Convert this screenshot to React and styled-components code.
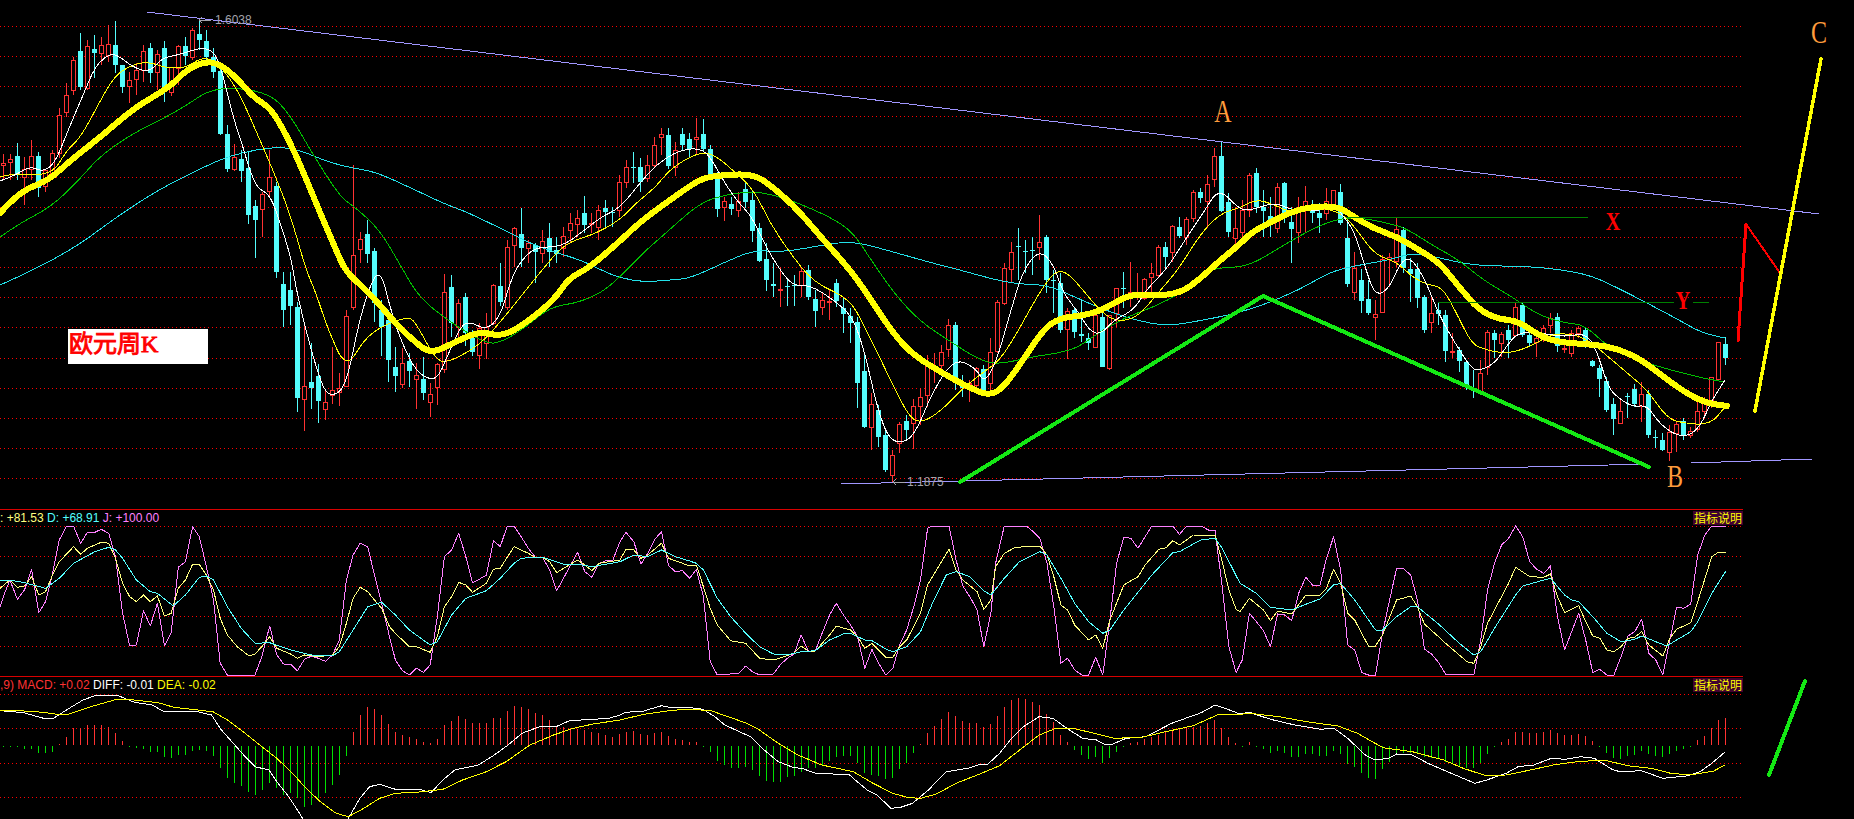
import React from 'react';
import styled, { createGlobalStyle } from 'styled-components';

const GlobalStyle = createGlobalStyle`
    html, body {
        margin: 0;
        background: #000;
        overflow: hidden;
    }
    body {
        font-family: "Liberation Sans", Arial, sans-serif;
    }
`;

const Page = styled.div`
    display: flex;
    flex-direction: column;
    width: 1854px;
    height: 819px;
    background: #000;
`;

const Pane = styled.div`
    position: relative;
    flex: 0 0 ${(p) => p.$height}px;
    overflow: hidden;
`;

const Divider = styled.div`
    flex: 0 0 1px;
    width: 1743px;
    background: #d80000;
`;

const ChartSvg = styled.svg`
    display: block;
    width: 1854px;
    height: 100%;
`;

const StockTag = styled.div`
    position: absolute;
    left: 68px;
    top: 329px;
    width: 140px;
    height: 35px;
    padding-left: 1px;
    box-sizing: border-box;
    background: #fff;
    color: #ff0000;
    font: 24px/30px "Liberation Serif", "Noto Sans CJK SC", serif;
    -webkit-text-stroke: 0.9px #ff0000;
    white-space: nowrap;
`;

const WaveTag = styled.span`
    position: absolute;
    left: ${(p) => p.$x}px;
    top: ${(p) => p.$y}px;
    transform: translate(-50%, -50%) scaleY(1.3);
    color: ${(p) => p.$color};
    font: ${(p) => (p.$bold ? 'bold 20px' : '24px')} / 1 "Liberation Serif", serif;
`;

const PriceMark = styled.span`
    position: absolute;
    left: ${(p) => p.$x}px;
    top: ${(p) => p.$y}px;
    color: #a4a4ac;
    font-size: 12px;
    line-height: 12px;
`;

const Legend = styled.div`
    position: absolute;
    left: 0;
    top: 0;
    font-size: 12px;
    line-height: 16px;
    white-space: pre;
`;

const LegendItem = styled.span`
    color: ${(p) => p.$color};
`;

const HelpTag = styled.div`
    position: absolute;
    right: 111px;
    top: 1px;
    width: 50px;
    height: 14px;
    background: #400030;
    color: #ffff00;
    font: 12px/14px "Noto Sans CJK SC", sans-serif;
    text-align: center;
    white-space: nowrap;
`;

// traced from the picture: type, high, body top, body bottom, low (3x y)
const CANDLES = `r,462,490,494,540 r,462,478,485,540 c,430,468,525,540 r,470,508,530,615 r,420,468,508,540 c,455,468,565,590
r,510,510,558,575 r,450,460,525,535 r,325,346,458,475 r,250,286,335,350 r,170,180,270,285 c,100,153,262,270
r,120,138,265,270 c,105,148,158,235 r,110,136,158,195 r,75,132,165,185 c,63,136,195,220 c,195,195,260,280
r,215,240,258,310 r,190,210,238,285 r,135,152,210,245 c,130,144,218,248 r,150,162,215,270 c,123,144,262,305
r,200,200,275,288 r,135,138,205,255 c,110,138,168,195 r,85,90,172,180 c,55,102,120,150 c,90,123,170,185
c,145,172,215,235 c,200,213,403,405 c,375,402,507,515 r,432,472,507,512 c,450,478,513,545 c,455,504,645,672
c,600,618,660,775 r,575,583,628,712 r,450,532,572,590 c,545,558,815,835 c,815,852,930,982 c,815,870,918,975
c,905,922,1193,1235 r,970,1158,1196,1292 c,1030,1146,1163,1228 c,1092,1128,1202,1270 r,1170,1206,1228,1260 r,1040,1170,1186,1212
r,1120,1165,1176,1218 r,930,948,1158,1160 r,495,765,920,930 r,695,718,746,790 c,660,702,762,790 c,745,752,910,965
c,900,930,982,1068 c,930,960,1080,1145 c,1040,1102,1128,1175 r,1045,1090,1152,1165 c,1060,1082,1112,1160 r,1090,1126,1138,1228
c,1072,1138,1178,1200 r,1150,1182,1205,1250 r,1090,1092,1162,1215 r,822,876,1108,1120 c,825,862,968,1010 r,898,910,980,1010
c,878,892,1000,1038 c,990,1015,1055,1068 r,970,985,1065,1106 r,938,982,1030,1078 r,852,855,970,975 c,790,858,905,918
r,720,740,920,930 r,680,685,735,800 c,625,702,745,800 r,720,730,743,790 c,730,735,755,850 r,690,722,758,790
c,670,715,755,800 c,710,750,762,790 r,680,707,745,770 r,640,670,690,730 r,630,655,672,710 c,588,640,675,700
r,640,670,672,700 r,615,630,680,720 c,600,624,636,680 c,620,636,640,680 r,525,545,630,650 r,480,500,545,565
c,455,500,505,550 c,475,500,545,575 r,465,495,535,545 r,412,435,495,505 r,385,403,412,465 c,385,405,498,508
r,425,450,500,528 c,385,402,435,450 c,400,417,447,472 r,355,410,417,465 c,357,402,448,455 c,435,448,522,535
c,515,532,626,650 r,590,604,622,662 c,590,612,626,645 r,575,602,630,650 c,545,567,605,625 c,570,600,692,725
c,670,685,782,785 c,730,778,840,872 c,790,853,857,890 r,800,867,870,920 c,840,858,862,918 c,825,855,859,918
r,805,814,855,890 c,795,810,892,900 c,870,897,932,980 r,880,900,920,945 r,870,902,905,960 c,837,850,903,920
c,895,924,942,1000 c,925,948,968,1030 c,950,966,1150,1225 c,1060,1113,1282,1285 r,1180,1212,1280,1350 c,1215,1230,1310,1340
c,1285,1305,1410,1415 r,1350,1366,1424,1445 r,1265,1272,1330,1360 c,1245,1264,1290,1320 r,1197,1217,1270,1348 r,1165,1192,1217,1275
r,1065,1095,1185,1220 r,1060,1100,1102,1150 r,1035,1055,1095,1120 r,958,976,1048,1070 c,965,975,1150,1170 c,1125,1150,1165,1190
r,1140,1148,1152,1205 r,1100,1105,1155,1170 c,1095,1108,1178,1180 r,1015,1055,1148,1170 r,900,907,1052,1060 r,790,805,908,915
r,727,757,808,850 c,685,738,742,840 c,720,752,756,820 c,710,751,754,825 r,645,727,742,780 c,705,710,840,878
c,810,840,844,940 c,820,850,990,1000 r,925,932,988,1078 c,925,930,995,1015 c,900,1003,1007,1025 c,1000,1014,1030,1050
r,940,945,1042,1045 c,940,950,1100,1102 r,945,945,1103,1110 r,865,865,940,980 c,815,865,868,925 r,785,877,880,920
r,820,875,878,900 r,835,838,895,900 r,790,820,830,890 r,735,742,825,835 c,725,740,770,810 r,675,678,755,785
c,652,680,708,715 r,650,657,710,735 r,570,577,655,665 c,565,577,593,610 r,525,553,602,685 r,445,468,538,560
c,425,468,633,635 c,580,607,696,710 r,620,685,713,750 r,600,630,695,720 r,520,525,630,650 c,505,518,622,640
c,570,622,632,710 c,590,648,668,710 r,550,562,683,700 c,545,550,640,670 c,620,666,688,788 r,592,620,695,730
r,558,604,618,700 c,600,630,640,670 c,610,640,654,700 r,565,604,640,660 r,570,571,620,625 c,552,575,668,675
c,660,714,852,860 r,757,804,875,900 c,808,840,904,940 c,840,897,940,945 r,900,943,950,1020 r,765,778,937,940
r,760,772,778,860 r,655,688,782,800 c,680,690,805,820 c,775,808,822,905 c,790,808,893,925 c,885,892,990,998
r,890,940,965,1000 c,905,930,942,975 c,930,945,1052,1085 r,1000,1052,1055,1075 c,1040,1050,1082,1115 c,1080,1087,1155,1170
c,1110,1165,1170,1195 r,1080,1120,1175,1185 r,990,995,1100,1125 c,990,998,1020,1075 r,995,1003,1028,1070 c,975,990,1020,1075
r,905,922,1005,1010 c,905,915,1005,1010 c,990,1005,1030,1040 r,1000,1015,1025,1070 r,975,985,1000,1025 r,940,953,975,1000
c,940,950,1038,1055 r,1030,1044,1047,1058 r,990,1000,1060,1070 r,978,985,998,1015 c,980,990,1040,1045 c,1080,1083,1097,1100
c,1095,1105,1138,1190 c,1130,1143,1230,1235 c,1195,1213,1258,1305 r,1195,1232,1268,1272 c,1180,1188,1191,1255 c,1152,1168,1213,1220
r,1145,1183,1218,1265 c,1170,1183,1305,1315 c,1290,1312,1315,1345 c,1300,1320,1350,1352 r,1275,1295,1356,1382 r,1265,1273,1298,1355
c,1255,1262,1305,1320 r,1280,1292,1305,1315 r,1205,1232,1288,1295 r,1190,1208,1232,1245 r,1130,1132,1210,1225 r,1025,1027,1136,1140
c,1012,1033,1075,1095`
    .trim()
    .split(/\s+/)
    .map((row, i) => {
        const [type, ...ys] = row.split(',');
        const [high, top, bottom, low] = ys.map((v) => Math.round(Number(v) / 3));
        return { type, x: Math.round(3 + 7 * i), high, top, bottom, low };
    });

// histogram tips, one per candle (3x y, offset 500)
const MACD_BARS = [
    737, 735, 737, 747, 747, 758, 760, 755, 733, 712, 685, 685, 675, 675, 675, 682, 700, 723, 738, 745, 747, 755, 757, 772,
    773, 765, 765, 752, 750, 752, 768, 803, 835, 850, 857, 875, 885, 870, 850, 865, 885, 880, 895, 922, 915, 895, 880, 855,
    825, 768, 695, 645, 622, 628, 645, 672, 695, 705, 712, 717, 727, 728, 717, 675, 662, 648, 657, 668, 670, 668, 655, 655,
    632, 618, 622, 628, 640, 645, 660, 678, 680, 685, 687, 690, 697, 700, 705, 712, 703, 695, 693, 703, 705, 700, 696, 708,
    717, 720, 727, 726, 735, 755, 783, 795, 803, 805, 802, 810, 828, 842, 845, 845, 830, 828, 815, 805, 803, 795, 783, 772,
    768, 768, 790, 818, 825, 828, 838, 835, 808, 790, 760, 733, 698, 678, 657, 636, 648, 663, 668, 670, 682, 672, 648, 622,
    600, 595, 598, 605, 615, 642, 665, 705, 725, 750, 765, 777, 772, 790, 775, 755, 737, 730, 727, 718, 712, 705, 697, 690,
    685, 685, 680, 678, 668, 660, 685, 712, 728, 737, 727, 737, 747, 758, 752, 760, 770, 770, 763, 763, 767, 767, 752, 762,
    792, 800, 818, 833, 837, 808, 785, 762, 758, 758, 762, 770, 775, 778, 785, 792, 800, 805, 805, 790, 762, 742, 725, 716,
    696, 695, 698, 700, 695, 690, 698, 705, 705, 702, 708, 723, 737, 760, 775, 777, 767, 765, 752, 762, 767, 770, 762, 752,
    747, 737, 720, 708, 685, 660, 653,
];

const MA_THICK = `0,213 12,200 28,188 49,180 71,160 103,135 134,108 170,87 186,70 206,61 221,65 237,78 253,97 269,107 281,125 297,157 316,203 336,250 346,272 364,288 380,305 395,323 415,342 431,354 455,342 480,331 502,337 526,323 554,300 569,278 589,268 620,241 640,222 663,205 687,188 703,178 723,175 754,174 774,188 798,210 826,243 853,273 873,303 893,333 913,355 944,374 968,387 989,396 1004,387 1023,360 1043,330 1059,318 1087,315 1106,308 1130,294 1154,296 1181,293 1201,278 1217,263 1240,244 1252,232 1271,222 1291,212 1310,207 1338,206 1354,217 1373,228 1397,237 1416,248 1440,263 1459,287 1479,310 1498,319 1518,321 1538,335 1557,342 1585,344 1612,347 1639,358 1661,375 1686,393 1706,403 1727,406`;

const MA_WHITE = `0,181 16,175 30,166 43,172 55,163 67,133 83,95 95,67 105,57 115,53 134,68 150,72 162,58 178,55 202,47 214,52 221,67 233,117 243,147 249,168 257,188 269,194 277,213 291,257 295,283 304,323 316,367 326,395 339,394 348,377 360,317 374,275 382,275 389,303 397,330 411,363 423,377 437,380 447,357 461,325 471,322 486,330 500,317 510,283 518,265 534,247 561,247 581,233 601,217 620,208 640,183 656,165 679,150 703,148 715,165 727,187 739,203 752,217 766,247 782,273 794,286 810,285 834,300 853,317 865,353 877,407 889,440 905,443 917,430 932,393 954,358 976,368 984,383 996,363 1009,317 1023,270 1039,250 1053,263 1063,293 1079,313 1089,330 1100,335 1114,320 1134,310 1146,290 1166,270 1185,240 1205,210 1219,188 1240,210 1252,210 1275,202 1291,210 1299,208 1318,212 1334,203 1342,215 1354,230 1365,267 1375,296 1389,289 1400,263 1410,257 1424,277 1440,317 1455,343 1471,368 1479,371 1495,363 1506,347 1518,332 1541,333 1565,337 1585,333 1596,348 1608,387 1618,398 1633,407 1647,405 1659,423 1675,435 1688,436 1700,427 1712,400 1725,380`;

const MA_YELLOW = `0,177 12,173 51,176 67,150 81,137 99,103 115,75 134,64 150,62 166,68 186,68 202,57 217,62 237,88 257,133 277,180 291,217 306,270 316,293 328,330 346,369 364,340 380,327 409,316 417,325 437,362 451,361 471,350 484,340 502,320 526,290 542,270 565,243 593,235 620,220 636,203 656,187 671,168 699,152 715,155 735,172 754,190 770,223 790,253 814,283 849,298 865,327 889,377 909,417 921,423 940,412 964,387 984,372 1000,360 1017,333 1039,293 1055,271 1067,272 1083,290 1102,313 1118,322 1138,317 1158,293 1178,270 1201,233 1221,213 1240,208 1256,199 1275,205 1291,213 1318,207 1342,213 1357,230 1375,255 1397,262 1412,277 1428,285 1442,287 1455,310 1471,343 1483,349 1506,354 1530,347 1553,333 1577,335 1592,343 1612,360 1632,377 1647,390 1667,418 1682,423 1710,425 1725,407`;

const MA_GREEN = `0,237 20,223 51,207 79,180 99,157 130,135 170,115 190,103 206,92 229,87 269,93 289,113 312,153 340,197 356,208 380,230 403,270 419,297 447,320 486,344 502,342 526,327 550,307 577,303 601,293 620,277 644,252 667,232 695,207 715,197 750,191 774,195 798,203 830,217 853,232 873,263 897,297 921,322 948,340 976,358 996,365 1031,357 1059,353 1079,347 1098,333 1126,317 1154,307 1181,293 1205,273 1217,268 1240,267 1256,262 1279,248 1310,230 1334,220 1357,217 1397,225 1412,232 1432,245 1459,260 1483,280 1514,298 1538,315 1565,323 1585,325 1608,347 1643,362 1671,370 1702,378 1725,382`;

const MA_CYAN = `0,285 34,270 79,245 115,218 158,190 194,172 221,159 245,152 273,147 297,149 328,162 352,168 376,172 411,188 447,205 467,212 510,233 538,247 581,260 601,270 620,278 644,282 671,280 691,278 723,263 754,250 778,252 802,249 834,243 857,242 897,253 932,263 960,270 996,280 1019,284 1047,285 1075,297 1102,309 1134,320 1166,326 1193,322 1229,315 1240,312 1263,305 1299,290 1330,272 1354,266 1389,260 1412,253 1436,257 1475,266 1530,266 1585,273 1616,287 1647,303 1679,320 1702,333 1725,338`;

// indicator lines, traced per screen third at 3x
const J_LINE = [
    `0,320 10,285 25,240 44,298 62,270 80,208 98,338 115,305 133,220 150,120 168,78 186,78 204,130 221,97 240,97 256,88 275,100 292,170 310,340 328,438 345,435 363,332 380,378 398,310 416,438 433,397 451,202 469,185 487,80 504,110 522,200 540,300 557,490 575,525 645,525 662,470 682,378 700,465 717,492 735,492 752,512 770,478 788,468 805,475 823,484 841,465 858,420 876,240 893,165 911,130 930,140 947,225 965,310 985,410 1000,480 1018,512 1035,525 1053,505 1071,517 1088,495 1106,350 1124,170 1142,150 1160,100 1178,170 1195,248 1212,238 1230,225 1248,122 1265,140 1283,78 1300,78 1318,110 1336,145 1354,172 1372,172 1390,210 1408,272 1425,235 1443,195 1461,157 1479,215 1497,232 1515,190 1533,182 1550,180 1568,125`,
    `15,97 35,125 53,192 70,160 88,118 105,95 123,197 140,215 158,212 176,235 193,208 211,290 228,485 246,525 300,520 318,498 335,515 353,525 388,522 405,495 423,475 440,462 458,405 476,453 494,453 511,400 530,345 547,310 565,345 583,375 601,410 619,505 637,448 654,490 672,525 690,505 707,435 725,390 743,320 760,240 778,85 790,78 832,78 850,180 867,258 885,290 903,330 920,440 938,340 950,190 972,78 1028,78 1045,95 1062,115 1080,190 1097,320 1115,490 1132,475 1150,510 1168,525 1185,525 1203,472 1221,525 1239,360 1256,190 1274,112 1292,115 1310,145 1328,110 1345,78 1398,78 1415,103 1433,78 1470,78 1488,90 1505,92 1523,260 1540,440 1558,518`,
    `0,493 6,480 24,340 42,365 60,392 78,440 96,342 114,345 132,362 150,280 168,232 186,256 204,256 221,175 239,110 257,210 275,435 293,450 311,518 328,525 346,525 364,400 382,300 400,205 418,207 436,225 453,300 471,447 489,462 507,487 525,523 597,525 615,420 632,270 650,190 668,135 686,115 704,78 722,110 740,185 758,208 776,220 793,198 811,350 829,450 847,395 865,340 883,420 901,518 919,508 937,525 955,525 973,470 991,408 1008,395 1026,358 1044,460 1062,480 1080,525 1098,420 1115,322 1133,325 1151,312 1169,165 1187,105 1205,78 1240,78`,
];

const K_LINE = [
    `0,265 25,240 44,262 62,258 80,230 98,285 115,275 133,225 150,185 186,140 204,163 221,145 240,135 256,127 275,130 292,175 310,250 328,290 345,305 363,285 380,305 398,288 416,348 433,340 451,265 469,240 487,193 504,193 522,225 540,270 557,355 575,405 600,440 630,468 645,462 662,440 682,410 700,445 735,462 752,475 770,465 805,470 841,465 858,440 876,370 893,295 911,262 930,275 947,300 965,325 985,380 1000,400 1035,440 1053,440 1088,457 1106,410 1124,320 1142,290 1160,247 1178,255 1195,277 1230,250 1248,208 1265,205 1300,140 1318,150 1336,160 1354,172 1372,172 1390,185 1408,218 1425,205 1461,180 1479,195 1497,212 1515,190 1568,180`,
    `15,148 35,150 53,175 70,165 105,130 123,175 158,190 176,198 193,195 211,260 228,325 246,375 280,422 318,430 353,475 388,480 423,467 440,460 458,438 476,453 494,453 530,405 547,378 583,390 601,410 619,445 637,430 672,472 690,472 707,440 725,420 760,340 778,255 832,148 850,210 867,240 903,275 920,328 938,300 950,200 972,160 1000,142 1062,138 1080,165 1097,230 1115,315 1132,330 1150,375 1185,420 1203,405 1221,445 1239,360 1274,255 1310,230 1328,195 1363,148 1381,143 1398,122 1415,135 1450,105 1488,108 1505,105 1523,185 1540,270 1558,328`,
    `0,335 24,295 60,330 78,362 96,333 132,342 168,285 204,285 221,265 239,208 257,250 275,340 293,360 328,438 346,438 364,405 400,300 436,288 453,320 471,372 507,410 525,430 580,485 597,490 615,440 632,370 686,250 704,202 740,230 776,232 793,222 811,290 829,338 865,317 883,365 901,408 919,415 937,450 955,455 973,440 991,415 1008,412 1026,395 1044,435 1080,468 1098,415 1115,388 1151,368 1169,305 1205,170 1220,158 1240,157`,
];

const D_LINE = [
    `0,240 25,240 62,248 115,265 150,235 186,190 240,155 275,142 292,150 310,175 345,240 380,275 398,280 438,318 469,285 504,232 522,228 540,240 575,320 610,385 645,430 682,428 735,450 788,465 841,467 858,455 893,390 930,320 965,307 1000,345 1035,390 1088,435 1106,425 1142,345 1178,295 1230,272 1265,235 1300,190 1318,175 1354,172 1372,172 1425,193 1461,193 1497,200 1568,185`,
    `35,165 70,170 105,150 140,170 176,183 193,190 211,210 246,295 280,350 318,400 353,440 388,462 423,465 458,455 494,452 530,420 565,402 583,400 619,420 637,422 672,447 690,455 725,440 760,395 790,310 825,225 850,215 885,230 920,272 938,285 972,235 1010,185 1062,155 1080,165 1115,235 1150,310 1185,365 1221,400 1239,390 1274,330 1345,225 1398,158 1415,155 1450,132 1470,120 1505,115 1523,145`,
    `0,250 42,280 78,322 132,330 168,313 204,297 239,255 257,250 293,300 346,390 364,390 400,350 436,320 453,320 507,372 560,430 597,465 615,455 650,385 704,285 722,258 776,240 793,235 829,285 847,300 865,305 901,350 937,400 973,425 1008,418 1026,408 1062,425 1090,438 1115,420 1151,395 1169,365 1205,280 1240,215`,
];

const DIFF_LINE = [
    `0,632 60,638 110,655 135,655 175,625 210,600 245,585 295,585 340,607 385,615 415,635 500,635 535,645 560,690 590,730 620,770 645,800 680,810 700,845 730,890 755,935 775,975 820,1030 860,1000 881,955 910,895 935,860 960,853 1000,868 1060,868 1090,878 1120,840 1150,810 1210,795 1250,765 1285,735 1320,700 1370,678 1410,678 1440,662 1500,658 1540,655 1568,645`,
    `15,637 60,633 105,617 125,622 170,622 210,628 240,650 265,675 330,710 365,750 400,785 440,803 460,805 495,820 580,824 600,845 625,870 650,885 685,925 710,922 740,910 780,870 825,815 880,805 905,795 930,793 960,760 990,715 1020,680 1060,650 1095,655 1130,685 1170,715 1205,720 1225,733 1245,733 1280,715 1330,710 1395,670 1470,638 1505,615 1530,625`,
    `0,642 24,637 78,658 140,675 205,688 240,685 275,715 320,765 345,780 380,775 400,762 440,765 480,790 530,815 600,850 630,840 680,820 710,800 750,795 795,775 830,778 870,770 905,775 950,808 970,815 1025,812 1080,835 1140,828 1175,815 1205,790 1238,757`,
];

const DEA_LINE = [
    `0,630 60,633 110,637 150,644 175,642 230,620 295,598 340,600 400,608 440,622 500,630 540,636 575,660 620,700 660,738 700,775 740,820 770,860 810,905 850,940 881,950 920,925 960,895 1000,880 1060,876 1120,868 1170,840 1230,815 1280,785 1340,735 1400,705 1450,685 1500,672 1568,660`,
    `60,643 120,633 170,627 230,632 285,655 320,670 350,688 400,730 450,765 510,795 590,815 640,850 690,880 730,893 760,895 800,882 850,850 910,822 960,797 1000,760 1060,705 1100,686 1145,685 1200,700 1250,715 1320,712 1380,695 1450,677 1510,645`,
    `0,643 24,640 100,650 170,665 250,678 300,700 365,743 440,755 520,780 570,805 625,826 680,825 750,808 800,795 860,785 930,780 990,797 1050,805 1100,820 1150,825 1210,813 1238,795`,
];

const THIRDS = [
    { x: 0, sx: 2.529 },
    { x: 620, sx: 2.529 },
    { x: 1240, sx: 2.554 },
];

const traced = (parts) =>
    parts
        .map((part, i) =>
            part
                .split(' ')
                .map((pair) => {
                    const [zx, zy] = pair.split(',').map(Number);
                    const x = THIRDS[i].x + zx / THIRDS[i].sx;
                    return `${x.toFixed(1)},${(500 + zy / 3).toFixed(1)}`;
                })
                .join(' '),
        )
        .join(' ');

// rounds the corners of a traced line through the midpoints of its segments
const smoothPath = (points) => {
    const list = points.split(' ').map((pair) => pair.split(',').map(Number));
    let d = `M${list[0][0]} ${list[0][1]}`;
    for (let i = 1; i < list.length - 1; i += 1) {
        const [x, y] = list[i];
        const [nx, ny] = list[i + 1];
        d += `Q${x} ${y} ${(x + nx) / 2} ${(y + ny) / 2}`;
    }
    const last = list[list.length - 1];
    return `${d}L${last[0]} ${last[1]}`;
};

const MAIN_GRID = [26, 56, 86, 116, 146, 177, 207, 237, 267, 297, 327, 358, 388, 418, 448, 478];
const KDJ_GRID = [526, 556, 586, 616, 646];
const MACD_GRID = [694, 728, 763, 797];

const RED = '#ff3232';
const CYAN = '#54fcfc';

const Grid = ({ rows }) =>
    rows.map((y) => (
        <line
            key={y}
            x1="0"
            x2="1742"
            y1={y + 0.5}
            y2={y + 0.5}
            stroke="#ff0000"
            strokeDasharray="1 3"
            shapeRendering="crispEdges"
        />
    ));

const Curve = ({ points, color, width = 1 }) => (
    <polyline
        points={points}
        fill="none"
        stroke={color}
        strokeWidth={width}
        strokeLinejoin="round"
        strokeLinecap="round"
        shapeRendering="crispEdges"
    />
);

const MovingAverage = ({ points, color, width = 1 }) => (
    <path
        d={smoothPath(points)}
        fill="none"
        stroke={color}
        strokeWidth={width}
        strokeLinejoin="round"
        strokeLinecap="round"
        shapeRendering="crispEdges"
    />
);

const Candle = ({ type, x, high, top, bottom, low }) => {
    const color = type === 'r' ? RED : CYAN;
    const bodyHeight = Math.max(bottom - top, 1);
    return (
        <g shapeRendering="crispEdges">
            <rect x={x} y={high} width="1" height={low - high} fill={color} />
            {type === 'r' ? (
                <rect x={x - 1.5} y={top + 0.5} width="4" height={bodyHeight} fill="#000" stroke={color} />
            ) : (
                <rect x={x - 2} y={top} width="5" height={bodyHeight} fill={color} />
            )}
        </g>
    );
};

const Histogram = () =>
    MACD_BARS.map((z, i) => {
        const tip = Math.round(500 + z / 3);
        const up = tip < 745;
        const y = up ? tip : 746;
        return (
            <rect
                key={i}
                x={Math.round(3 + 7 * i)}
                y={y}
                width="1"
                height={Math.max(up ? 745 - tip : tip - 746, 1)}
                fill={up ? '#ff3232' : '#00e000'}
                shapeRendering="crispEdges"
            />
        );
    });

const PriceArrow = ({ x, y }) => (
    <g stroke="#a4a4ac" fill="none" shapeRendering="crispEdges">
        <path d={`M${x} ${y}h12`} />
        <path d={`M${x + 3} ${y - 3}l-3 3l3 3`} />
    </g>
);

const MainChart = () => (
    <ChartSvg viewBox="0 0 1854 509">
        <Grid rows={MAIN_GRID} />
        {CANDLES.map((c) => (
            <Candle key={c.x} {...c} />
        ))}
        <MovingAverage points={MA_CYAN} color="#22e0e8" />
        <MovingAverage points={MA_GREEN} color="#00c000" />
        <MovingAverage points={MA_YELLOW} color="#ffff00" />
        <MovingAverage points={MA_WHITE} color="#ffffff" />
        <MovingAverage points={MA_THICK} color="#ffff00" width={6} />

        <Curve points="147,12 1819,214" color="#a096ff" />
        <Curve points="841,484 1649,464" color="#a096ff" />
        <Curve points="1691,463 1812,459" color="#a096ff" />
        <PriceArrow x={199} y={20} />
        <PriceArrow x={893} y={482} />

        <Curve points="1346,217 1588,217" color="#008000" />
        <Curve points="1438,302 1674,302" color="#008000" />
        <Curve points="1693,302 1709,302" color="#008000" />

        <Curve points="960,482 1263,296 1649,467" color="#14e814" width={4} />
        <Curve points="1738,341 1746,224" color="#ff0000" width={3} />
        <Curve points="1746,224 1780,273" color="#ff0000" width={2} />
        <Curve points="1755,411 1821,59" color="#ffff00" width={3.5} />
    </ChartSvg>
);

const KdjChart = () => (
    <ChartSvg viewBox="0 510 1854 166">
        <Grid rows={KDJ_GRID} />
        <Curve points={traced(J_LINE)} color="#ff80ff" />
        <Curve points={traced(K_LINE)} color="#ffff80" />
        <Curve points={traced(D_LINE)} color="#55ffff" />
    </ChartSvg>
);

const MacdChart = () => (
    <ChartSvg viewBox="0 677 1854 142">
        <Grid rows={MACD_GRID} />
        <Histogram />
        <Curve points={traced(DIFF_LINE)} color="#ffffff" />
        <Curve points={traced(DEA_LINE)} color="#ffff00" />
        <Curve points="1769,775 1805,681" color="#14e814" width={4} />
    </ChartSvg>
);

const App = () => (
    <Page>
        <GlobalStyle />
        <Pane $height={509}>
            <MainChart />
            <StockTag>欧元周K</StockTag>
            <PriceMark $x={215} $y={14}>1.6038</PriceMark>
            <PriceMark $x={907} $y={476}>1.1875</PriceMark>
            <WaveTag $x={1223} $y={112} $color="#ff9c3c">A</WaveTag>
            <WaveTag $x={1675} $y={477} $color="#ff9c3c">B</WaveTag>
            <WaveTag $x={1819} $y={33} $color="#ff9c3c">C</WaveTag>
            <WaveTag $x={1613} $y={221} $color="#ff0000" $bold>X</WaveTag>
            <WaveTag $x={1683} $y={300} $color="#ff0000" $bold>Y</WaveTag>
        </Pane>
        <Divider />
        <Pane $height={166}>
            <KdjChart />
            <Legend>
                <LegendItem $color="#ffff80">: +81.53 </LegendItem>
                <LegendItem $color="#55ffff">D: +68.91 </LegendItem>
                <LegendItem $color="#ff80ff">J: +100.00</LegendItem>
            </Legend>
            <HelpTag>指标说明</HelpTag>
        </Pane>
        <Divider />
        <Pane $height={142}>
            <MacdChart />
            <Legend>
                <LegendItem $color="#ff3232">,9) MACD: +0.02 </LegendItem>
                <LegendItem $color="#ffffff">DIFF: -0.01 </LegendItem>
                <LegendItem $color="#ffff00">DEA: -0.02</LegendItem>
            </Legend>
            <HelpTag>指标说明</HelpTag>
        </Pane>
    </Page>
);

export default App;
